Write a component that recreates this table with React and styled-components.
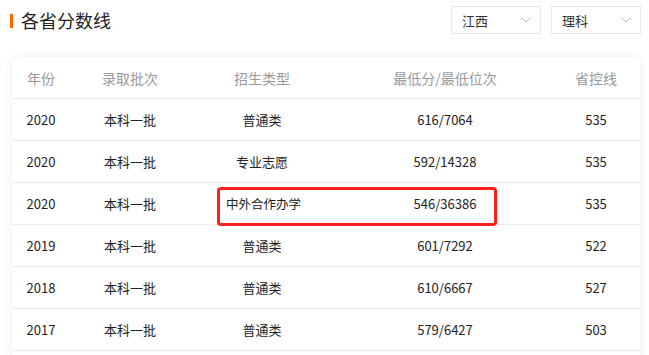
import React from "react";
import styled, { createGlobalStyle } from "styled-components";

const Global = createGlobalStyle`
  html, body { margin: 0; padding: 0; background: #fff; }
  body { font-family: "Noto Sans CJK SC", "Noto Sans", sans-serif; color: #222; }
`;

const Page = styled.div`
  width: 649px;
  height: 355px;
  overflow: hidden;
  box-sizing: border-box;
  padding: 6px 8px 0 10px;
`;

const TopBar = styled.div`
  display: flex;
  align-items: center;
  justify-content: space-between;
  height: 28px;
`;

const Title = styled.h2`
  margin: 0;
  display: flex;
  align-items: center;
  font-size: 18px;
  font-weight: 400;
  color: #222;
  line-height: 28px;
  &::before {
    content: "";
    display: block;
    width: 3px;
    height: 14px;
    background: #ff6a00;
    margin-right: 8px;
    margin-top: 1px;
  }
`;

const Selects = styled.div`
  display: flex;
  gap: 10px;
`;

const Select = styled.div`
  width: 90px;
  height: 28px;
  box-sizing: border-box;
  border: 1px solid #e8e8e8;
  display: flex;
  align-items: center;
  justify-content: space-between;
  padding: 0 9px 0 10px;
  font-size: 13px;
  color: #333;
`;

const Chevron = () => (
  <svg width="10" height="6" viewBox="0 0 10 6">
    <path d="M0.5 0.5 L5 5 L9.5 0.5" fill="none" stroke="#bbb" strokeWidth="1" />
  </svg>
);

const Card = styled.div`
  margin: 23px 1px 0 2px;
  padding-bottom: 40px;
  background: #fff;
  border-radius: 6px;
  box-shadow: 0 0 10px rgba(0, 0, 0, 0.08);
  position: relative;
`;

const Row = styled.div`
  display: grid;
  grid-template-columns: 58px 120px 144px 222px 80px 1fr;
  height: 42px;
  align-items: center;
  border-bottom: 1px solid #ebebeb;
  box-sizing: border-box;
  position: relative;
  font-size: ${(p) => (p.$head ? "14px" : "13px")};
  color: ${(p) => (p.$head ? "#999" : "#222")};
`;

const Cell = styled.div`
  text-align: ${(p) => (p.$left ? "left" : "center")};
  padding-left: ${(p) => (p.$left ? "36px" : "0")};
  white-space: nowrap;
  font-size: ${(p) => (p.$left ? "12.5px" : "inherit")};
`;

const Mark = styled.div`
  position: absolute;
  left: 205px;
  top: 4px;
  width: 280px;
  height: 39px;
  box-sizing: border-box;
  border: 3px solid #ff1f1f;
  border-radius: 4px;
  pointer-events: none;
`;

const head = ["年份", "录取批次", "招生类型", "最低分/最低位次", "省控线"];
const rows = [
  ["2020", "本科一批", "普通类", "616/7064", "535"],
  ["2020", "本科一批", "专业志愿", "592/14328", "535"],
  ["2020", "本科一批", "中外合作办学", "546/36386", "535", true],
  ["2019", "本科一批", "普通类", "601/7292", "522"],
  ["2018", "本科一批", "普通类", "610/6667", "527"],
  ["2017", "本科一批", "普通类", "579/6427", "503"],
];

export default function App() {
  return (
    <>
      <Global />
      <Page>
        <TopBar>
          <Title>各省分数线</Title>
          <Selects>
            <Select>
              江西
              <Chevron />
            </Select>
            <Select>
              理科
              <Chevron />
            </Select>
          </Selects>
        </TopBar>
        <Card>
          <Row $head>
            {head.map((h) => (
              <Cell key={h}>{h}</Cell>
            ))}
          </Row>
          {rows.map((r, i) => (
            <Row key={i}>
              <Cell>{r[0]}</Cell>
              <Cell>{r[1]}</Cell>
              <Cell $left={r[5]}>{r[2]}</Cell>
              <Cell>{r[3]}</Cell>
              <Cell>{r[4]}</Cell>
              {r[5] && <Mark />}
            </Row>
          ))}
        </Card>
      </Page>
    </>
  );
}
